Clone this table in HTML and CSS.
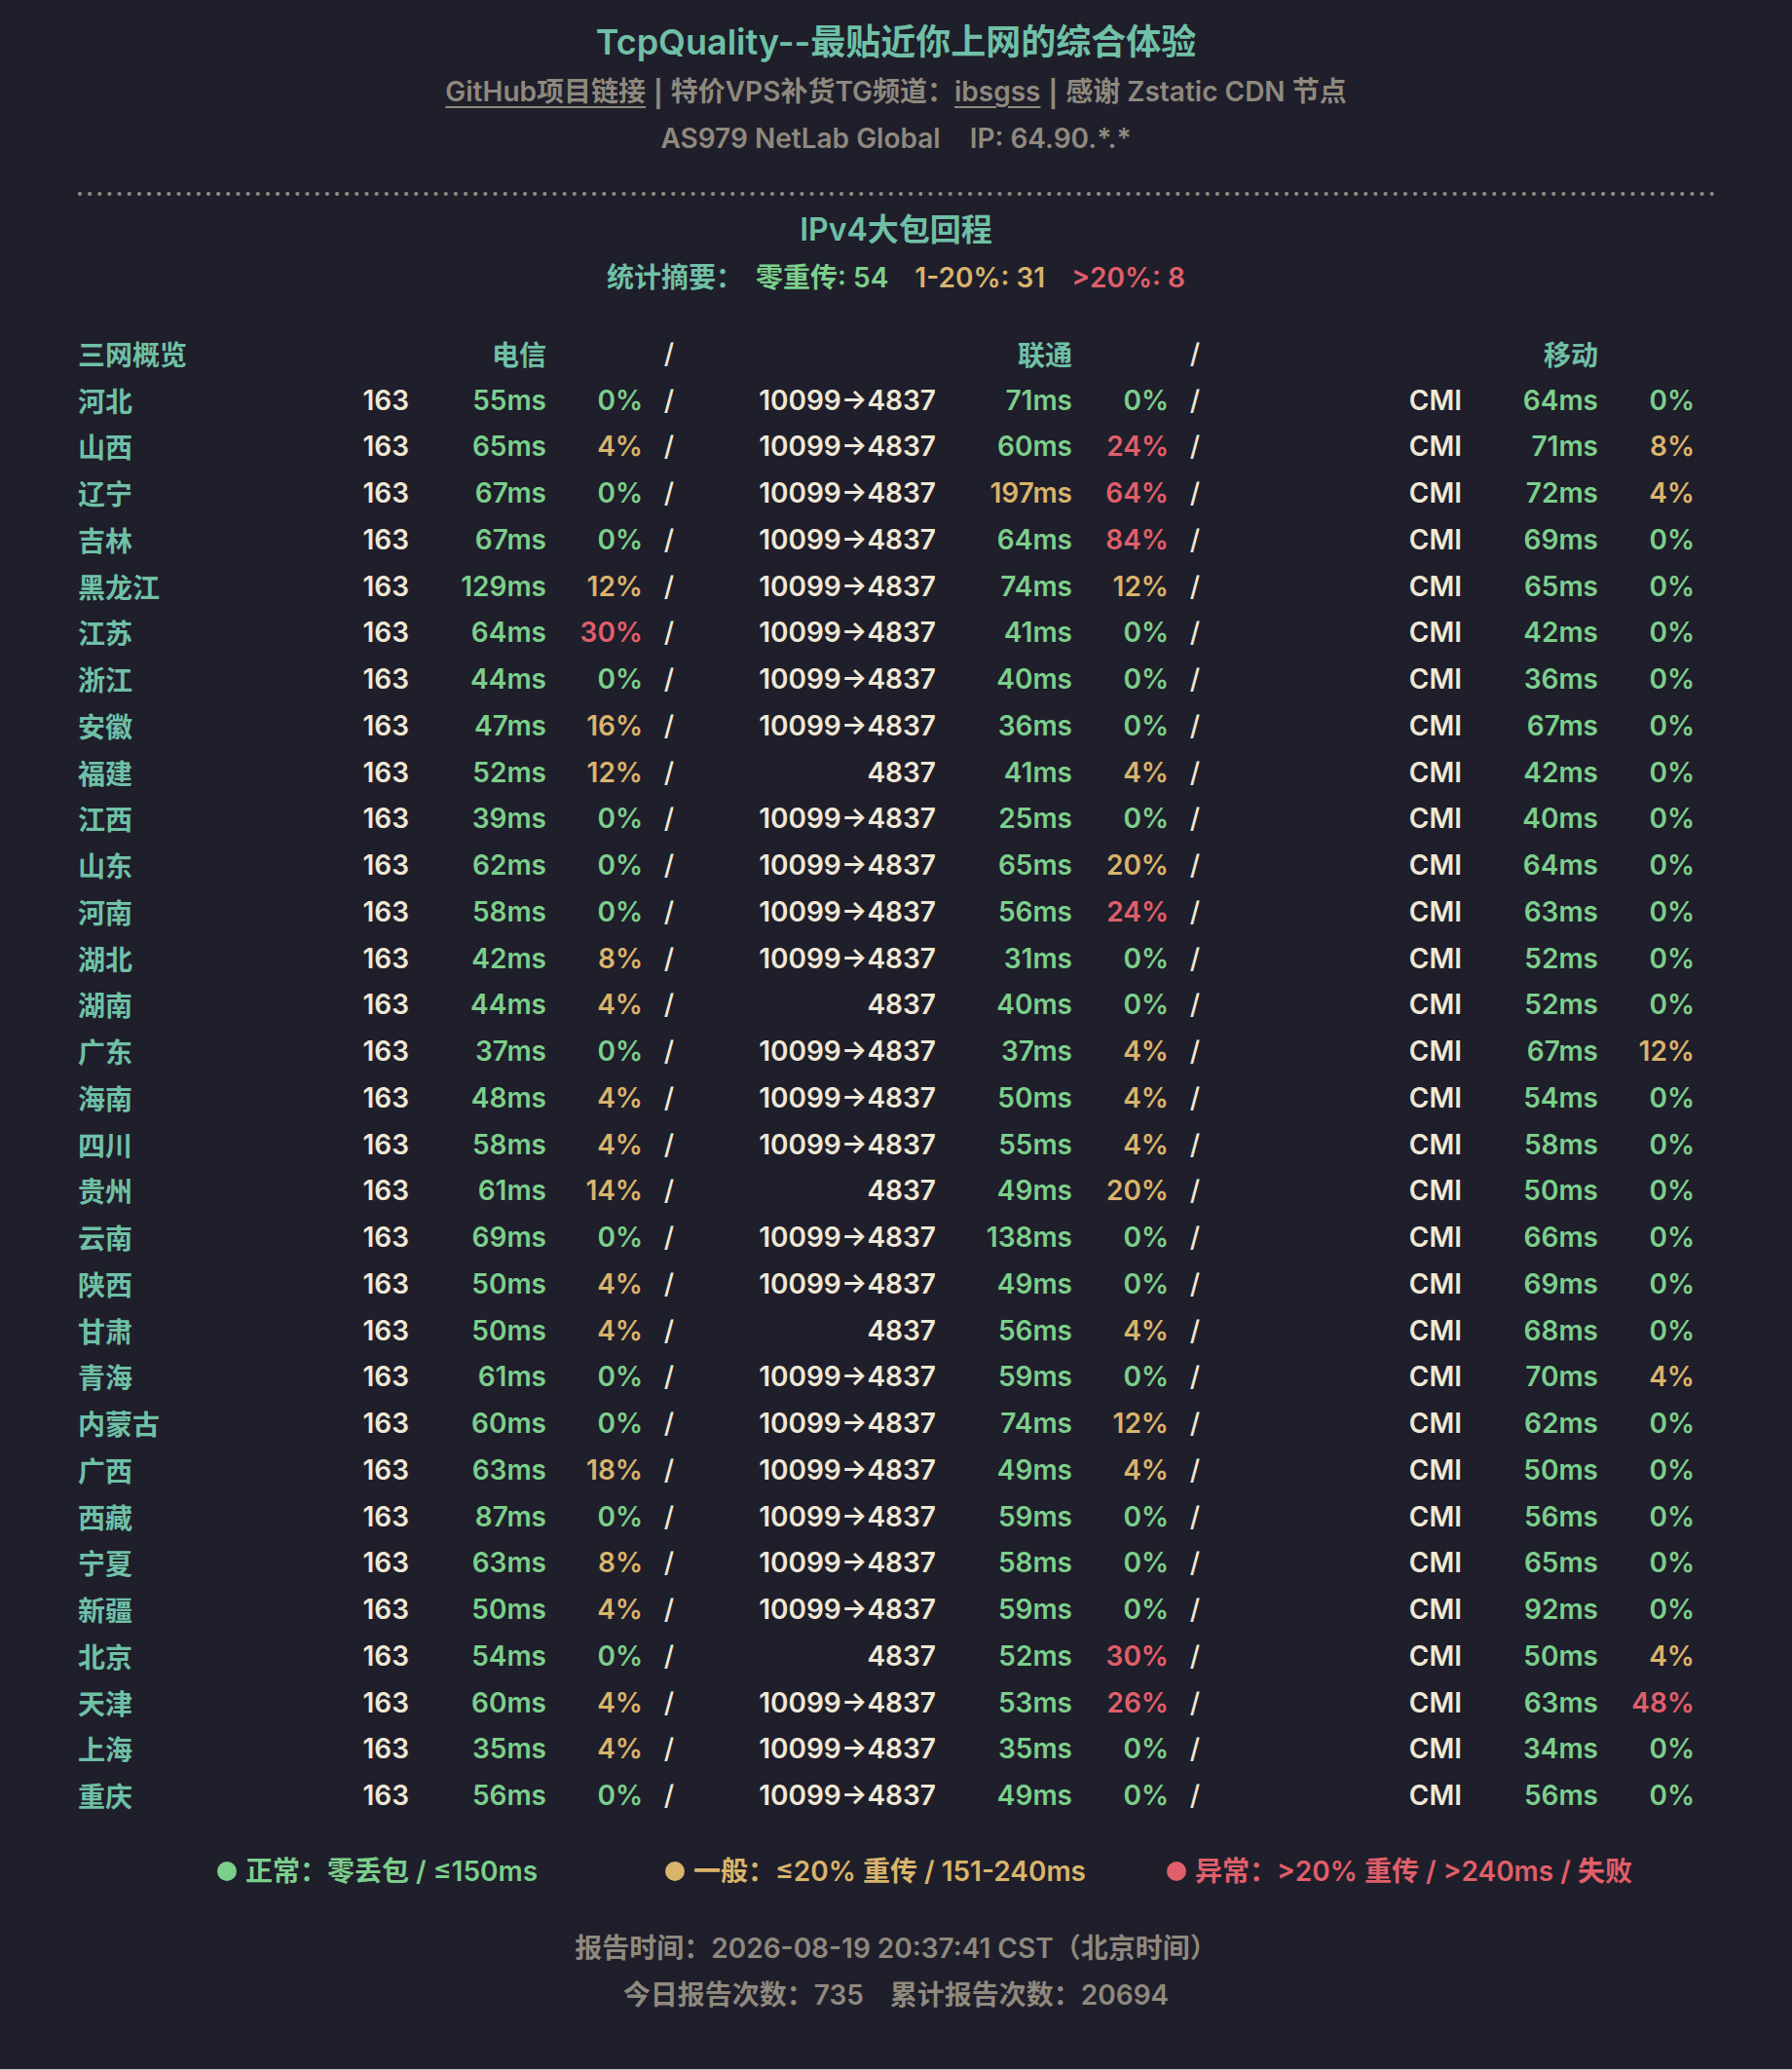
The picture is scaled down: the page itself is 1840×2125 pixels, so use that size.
FILE: index.html
```html
<!DOCTYPE html>
<html lang="zh-CN">
<head>
<meta charset="utf-8">
<title>TcpQuality</title>
<link rel="stylesheet" href="styles.css">
</head>
<body>
<main class="page">
  <header class="head">
    <h1 class="title">TcpQuality--最贴近你上网的综合体验</h1>
    <p class="sub"><a class="link" href="#">GitHub项目链接</a><span class="bar">|</span>特价VPS补货TG频道：<a class="link" href="#">ibsgss</a><span class="bar">|</span>感谢 Zstatic CDN 节点</p>
    <p class="asline"><span>AS979 NetLab Global</span><span class="ip">IP: 64.90.*.*</span></p>
  </header>
  <div class="divider"></div>
  <h2 class="section">IPv4大包回程</h2>
  <p class="summary"><span class="lbl">统计摘要：</span><span class="seg first g">零重传: 54</span><span class="seg y">1-20%: 31</span><span class="seg r">&gt;20%: 8</span></p>

  <div class="tbl">
    <div class="row hdr"><span class="prov">三网概览</span><span></span><span class="num">电信</span><span></span><span class="sl">/</span><span></span><span class="num">联通</span><span></span><span class="sl">/</span><span></span><span class="num">移动</span><span></span></div>
    <div class="row"><span class="prov">河北</span><span class="asn">163</span><span class="num g">55ms</span><span class="num g">0%</span><span class="sl">/</span><span class="asn">10099→4837</span><span class="num g">71ms</span><span class="num g">0%</span><span class="sl">/</span><span class="asn">CMI</span><span class="num g">64ms</span><span class="num g">0%</span></div>
    <div class="row"><span class="prov">山西</span><span class="asn">163</span><span class="num g">65ms</span><span class="num y">4%</span><span class="sl">/</span><span class="asn">10099→4837</span><span class="num g">60ms</span><span class="num r">24%</span><span class="sl">/</span><span class="asn">CMI</span><span class="num g">71ms</span><span class="num y">8%</span></div>
    <div class="row"><span class="prov">辽宁</span><span class="asn">163</span><span class="num g">67ms</span><span class="num g">0%</span><span class="sl">/</span><span class="asn">10099→4837</span><span class="num y">197ms</span><span class="num r">64%</span><span class="sl">/</span><span class="asn">CMI</span><span class="num g">72ms</span><span class="num y">4%</span></div>
    <div class="row"><span class="prov">吉林</span><span class="asn">163</span><span class="num g">67ms</span><span class="num g">0%</span><span class="sl">/</span><span class="asn">10099→4837</span><span class="num g">64ms</span><span class="num r">84%</span><span class="sl">/</span><span class="asn">CMI</span><span class="num g">69ms</span><span class="num g">0%</span></div>
    <div class="row"><span class="prov">黑龙江</span><span class="asn">163</span><span class="num g">129ms</span><span class="num y">12%</span><span class="sl">/</span><span class="asn">10099→4837</span><span class="num g">74ms</span><span class="num y">12%</span><span class="sl">/</span><span class="asn">CMI</span><span class="num g">65ms</span><span class="num g">0%</span></div>
    <div class="row"><span class="prov">江苏</span><span class="asn">163</span><span class="num g">64ms</span><span class="num r">30%</span><span class="sl">/</span><span class="asn">10099→4837</span><span class="num g">41ms</span><span class="num g">0%</span><span class="sl">/</span><span class="asn">CMI</span><span class="num g">42ms</span><span class="num g">0%</span></div>
    <div class="row"><span class="prov">浙江</span><span class="asn">163</span><span class="num g">44ms</span><span class="num g">0%</span><span class="sl">/</span><span class="asn">10099→4837</span><span class="num g">40ms</span><span class="num g">0%</span><span class="sl">/</span><span class="asn">CMI</span><span class="num g">36ms</span><span class="num g">0%</span></div>
    <div class="row"><span class="prov">安徽</span><span class="asn">163</span><span class="num g">47ms</span><span class="num y">16%</span><span class="sl">/</span><span class="asn">10099→4837</span><span class="num g">36ms</span><span class="num g">0%</span><span class="sl">/</span><span class="asn">CMI</span><span class="num g">67ms</span><span class="num g">0%</span></div>
    <div class="row"><span class="prov">福建</span><span class="asn">163</span><span class="num g">52ms</span><span class="num y">12%</span><span class="sl">/</span><span class="asn">4837</span><span class="num g">41ms</span><span class="num y">4%</span><span class="sl">/</span><span class="asn">CMI</span><span class="num g">42ms</span><span class="num g">0%</span></div>
    <div class="row"><span class="prov">江西</span><span class="asn">163</span><span class="num g">39ms</span><span class="num g">0%</span><span class="sl">/</span><span class="asn">10099→4837</span><span class="num g">25ms</span><span class="num g">0%</span><span class="sl">/</span><span class="asn">CMI</span><span class="num g">40ms</span><span class="num g">0%</span></div>
    <div class="row"><span class="prov">山东</span><span class="asn">163</span><span class="num g">62ms</span><span class="num g">0%</span><span class="sl">/</span><span class="asn">10099→4837</span><span class="num g">65ms</span><span class="num y">20%</span><span class="sl">/</span><span class="asn">CMI</span><span class="num g">64ms</span><span class="num g">0%</span></div>
    <div class="row"><span class="prov">河南</span><span class="asn">163</span><span class="num g">58ms</span><span class="num g">0%</span><span class="sl">/</span><span class="asn">10099→4837</span><span class="num g">56ms</span><span class="num r">24%</span><span class="sl">/</span><span class="asn">CMI</span><span class="num g">63ms</span><span class="num g">0%</span></div>
    <div class="row"><span class="prov">湖北</span><span class="asn">163</span><span class="num g">42ms</span><span class="num y">8%</span><span class="sl">/</span><span class="asn">10099→4837</span><span class="num g">31ms</span><span class="num g">0%</span><span class="sl">/</span><span class="asn">CMI</span><span class="num g">52ms</span><span class="num g">0%</span></div>
    <div class="row"><span class="prov">湖南</span><span class="asn">163</span><span class="num g">44ms</span><span class="num y">4%</span><span class="sl">/</span><span class="asn">4837</span><span class="num g">40ms</span><span class="num g">0%</span><span class="sl">/</span><span class="asn">CMI</span><span class="num g">52ms</span><span class="num g">0%</span></div>
    <div class="row"><span class="prov">广东</span><span class="asn">163</span><span class="num g">37ms</span><span class="num g">0%</span><span class="sl">/</span><span class="asn">10099→4837</span><span class="num g">37ms</span><span class="num y">4%</span><span class="sl">/</span><span class="asn">CMI</span><span class="num g">67ms</span><span class="num y">12%</span></div>
    <div class="row"><span class="prov">海南</span><span class="asn">163</span><span class="num g">48ms</span><span class="num y">4%</span><span class="sl">/</span><span class="asn">10099→4837</span><span class="num g">50ms</span><span class="num y">4%</span><span class="sl">/</span><span class="asn">CMI</span><span class="num g">54ms</span><span class="num g">0%</span></div>
    <div class="row"><span class="prov">四川</span><span class="asn">163</span><span class="num g">58ms</span><span class="num y">4%</span><span class="sl">/</span><span class="asn">10099→4837</span><span class="num g">55ms</span><span class="num y">4%</span><span class="sl">/</span><span class="asn">CMI</span><span class="num g">58ms</span><span class="num g">0%</span></div>
    <div class="row"><span class="prov">贵州</span><span class="asn">163</span><span class="num g">61ms</span><span class="num y">14%</span><span class="sl">/</span><span class="asn">4837</span><span class="num g">49ms</span><span class="num y">20%</span><span class="sl">/</span><span class="asn">CMI</span><span class="num g">50ms</span><span class="num g">0%</span></div>
    <div class="row"><span class="prov">云南</span><span class="asn">163</span><span class="num g">69ms</span><span class="num g">0%</span><span class="sl">/</span><span class="asn">10099→4837</span><span class="num g">138ms</span><span class="num g">0%</span><span class="sl">/</span><span class="asn">CMI</span><span class="num g">66ms</span><span class="num g">0%</span></div>
    <div class="row"><span class="prov">陕西</span><span class="asn">163</span><span class="num g">50ms</span><span class="num y">4%</span><span class="sl">/</span><span class="asn">10099→4837</span><span class="num g">49ms</span><span class="num g">0%</span><span class="sl">/</span><span class="asn">CMI</span><span class="num g">69ms</span><span class="num g">0%</span></div>
    <div class="row"><span class="prov">甘肃</span><span class="asn">163</span><span class="num g">50ms</span><span class="num y">4%</span><span class="sl">/</span><span class="asn">4837</span><span class="num g">56ms</span><span class="num y">4%</span><span class="sl">/</span><span class="asn">CMI</span><span class="num g">68ms</span><span class="num g">0%</span></div>
    <div class="row"><span class="prov">青海</span><span class="asn">163</span><span class="num g">61ms</span><span class="num g">0%</span><span class="sl">/</span><span class="asn">10099→4837</span><span class="num g">59ms</span><span class="num g">0%</span><span class="sl">/</span><span class="asn">CMI</span><span class="num g">70ms</span><span class="num y">4%</span></div>
    <div class="row"><span class="prov">内蒙古</span><span class="asn">163</span><span class="num g">60ms</span><span class="num g">0%</span><span class="sl">/</span><span class="asn">10099→4837</span><span class="num g">74ms</span><span class="num y">12%</span><span class="sl">/</span><span class="asn">CMI</span><span class="num g">62ms</span><span class="num g">0%</span></div>
    <div class="row"><span class="prov">广西</span><span class="asn">163</span><span class="num g">63ms</span><span class="num y">18%</span><span class="sl">/</span><span class="asn">10099→4837</span><span class="num g">49ms</span><span class="num y">4%</span><span class="sl">/</span><span class="asn">CMI</span><span class="num g">50ms</span><span class="num g">0%</span></div>
    <div class="row"><span class="prov">西藏</span><span class="asn">163</span><span class="num g">87ms</span><span class="num g">0%</span><span class="sl">/</span><span class="asn">10099→4837</span><span class="num g">59ms</span><span class="num g">0%</span><span class="sl">/</span><span class="asn">CMI</span><span class="num g">56ms</span><span class="num g">0%</span></div>
    <div class="row"><span class="prov">宁夏</span><span class="asn">163</span><span class="num g">63ms</span><span class="num y">8%</span><span class="sl">/</span><span class="asn">10099→4837</span><span class="num g">58ms</span><span class="num g">0%</span><span class="sl">/</span><span class="asn">CMI</span><span class="num g">65ms</span><span class="num g">0%</span></div>
    <div class="row"><span class="prov">新疆</span><span class="asn">163</span><span class="num g">50ms</span><span class="num y">4%</span><span class="sl">/</span><span class="asn">10099→4837</span><span class="num g">59ms</span><span class="num g">0%</span><span class="sl">/</span><span class="asn">CMI</span><span class="num g">92ms</span><span class="num g">0%</span></div>
    <div class="row"><span class="prov">北京</span><span class="asn">163</span><span class="num g">54ms</span><span class="num g">0%</span><span class="sl">/</span><span class="asn">4837</span><span class="num g">52ms</span><span class="num r">30%</span><span class="sl">/</span><span class="asn">CMI</span><span class="num g">50ms</span><span class="num y">4%</span></div>
    <div class="row"><span class="prov">天津</span><span class="asn">163</span><span class="num g">60ms</span><span class="num y">4%</span><span class="sl">/</span><span class="asn">10099→4837</span><span class="num g">53ms</span><span class="num r">26%</span><span class="sl">/</span><span class="asn">CMI</span><span class="num g">63ms</span><span class="num r">48%</span></div>
    <div class="row"><span class="prov">上海</span><span class="asn">163</span><span class="num g">35ms</span><span class="num y">4%</span><span class="sl">/</span><span class="asn">10099→4837</span><span class="num g">35ms</span><span class="num g">0%</span><span class="sl">/</span><span class="asn">CMI</span><span class="num g">34ms</span><span class="num g">0%</span></div>
    <div class="row"><span class="prov">重庆</span><span class="asn">163</span><span class="num g">56ms</span><span class="num g">0%</span><span class="sl">/</span><span class="asn">10099→4837</span><span class="num g">49ms</span><span class="num g">0%</span><span class="sl">/</span><span class="asn">CMI</span><span class="num g">56ms</span><span class="num g">0%</span></div>
  </div>

  <div class="legend">
    <span class="item g"><i class="dot"></i>正常：零丢包 / ≤150ms</span>
    <span class="item y"><i class="dot"></i>一般：≤20% 重传 / 151-240ms</span>
    <span class="item r"><i class="dot"></i>异常：&gt;20% 重传 / &gt;240ms / 失败</span>
  </div>

  <footer class="foot">
    <p>报告时间：2026-08-19 20:37:41 CST（北京时间）</p>
    <p><span>今日报告次数：735</span><span class="cnt">累计报告次数：20694</span></p>
  </footer>
</main>
</body>
</html>
```

FILE: styles.css
```css
html {
  background: #c4c4c6;
}
body {
  margin: 0;
  height: 2124px;
  background: #1f1e2b;
  font-family: Inter, "Noto Sans CJK SC", sans-serif;
  font-weight: 600;
  font-size: 28px;
  color: #efe8d5;
}
.page {
  width: 1680px;
  margin: 0 auto;
  padding-top: 23px;
}
.head {
  text-align: center;
}
.title {
  margin: 0;
  font-size: 36px;
  line-height: 40px;
  font-weight: 600;
  color: #6fc0a6;
}
.sub {
  margin: 6px 0 0;
  line-height: 48px;
  color: #8f897e;
}
.link {
  color: #8f897e;
  text-decoration: underline;
  text-decoration-thickness: 2px;
  text-underline-offset: 5px;
}
.bar {
  font-family: "DejaVu Sans", sans-serif;
  font-weight: 700;
  font-size: 32px;
  margin: 0 7px;
}
.asline {
  margin: 0;
  line-height: 48px;
  color: #8f897e;
}
.ip {
  margin-left: 30px;
}
.divider {
  margin-top: 31px;
  height: 4px;
  background: radial-gradient(circle at 2px 2px, #8f897e 1.8px, transparent 2.3px) 0 0 / 10.17px 4px repeat-x;
}
.section {
  margin: 15px 0 0;
  text-align: center;
  font-size: 32px;
  line-height: 40px;
  font-weight: 600;
  color: #6fc0a6;
}
.summary {
  margin: 9px 0 0;
  text-align: center;
  line-height: 40px;
}
.lbl {
  color: #6fc0a6;
}
.seg {
  margin-left: 27px;
}
.seg.first {
  margin-left: 13px;
}
.tbl {
  margin-top: 34px;
}
.row {
  display: grid;
  grid-template-columns: 203px 137px 141px 99px 54px 247px 140px 99px 54px 247px 140px 99px;
  height: 47.75px;
  align-items: center;
  white-space: nowrap;
}
.prov {
  color: #6fc0a6;
  text-align: left;
}
.hdr .num {
  color: #6fc0a6;
}
.asn, .num {
  text-align: right;
}
.asn {
  color: #efe8d5;
}
.sl {
  text-align: center;
  color: #efe8d5;
  font-weight: 500;
}
.g { color: #7ccf8b; }
.y { color: #d9b46b; }
.r { color: #e05f6a; }
.legend {
  margin-top: 34px;
  padding-left: 143px;
  display: grid;
  grid-template-columns: 460px 515px auto;
  line-height: 40px;
}
.item {
  display: flex;
  align-items: center;
  white-space: nowrap;
}
.dot {
  width: 20px;
  height: 20px;
  border-radius: 50%;
  background: currentColor;
  margin-right: 9px;
  flex: none;
}
.foot {
  margin-top: 35px;
  text-align: center;
  line-height: 48px;
  color: #8f897e;
}
.foot p {
  margin: 0;
}
.cnt {
  margin-left: 27px;
}
```
